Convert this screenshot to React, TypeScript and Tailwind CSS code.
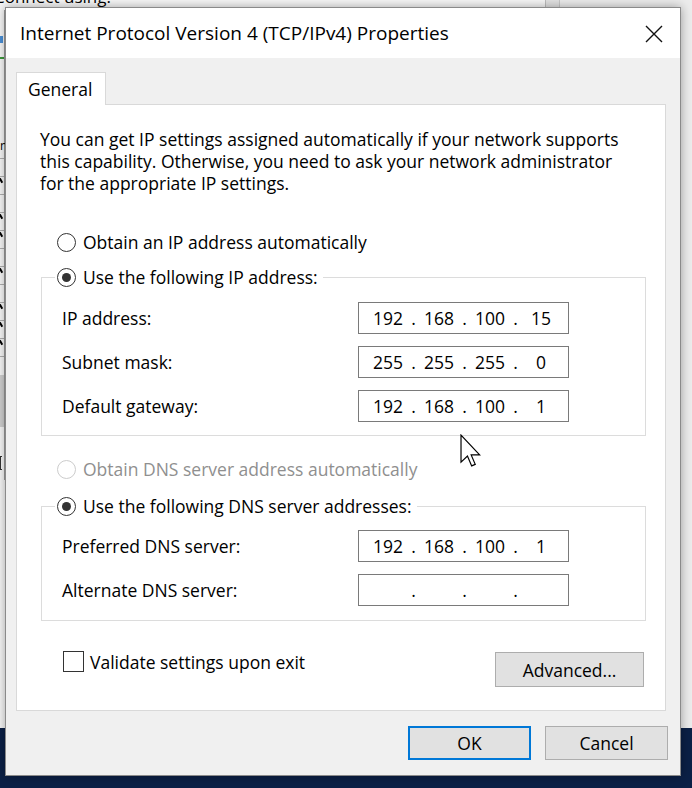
import React from "react";

function Radio({ checked, disabled }: { checked?: boolean; disabled?: boolean }) {
  return (
    <span
      className={
        disabled
          ? "flex h-[19px] w-[19px] shrink-0 items-center justify-center rounded-full border border-[#cccccc] bg-white"
          : "flex h-[19px] w-[19px] shrink-0 items-center justify-center rounded-full border border-[#333333] bg-white"
      }
    >
      {checked && <span className="h-[9px] w-[9px] rounded-full bg-[#333333]" />}
    </span>
  );
}

function IpField({ octets }: { octets: string[] }) {
  return (
    <div className="flex h-[32px] w-[211px] items-center border border-[#7a7a7a] bg-white pl-[9px]">
      {octets.map((o, i) => (
        <React.Fragment key={i}>
          <span className="w-[40px] text-center">{o}</span>
          {i < 3 && <span className="w-[11px] text-center">.</span>}
        </React.Fragment>
      ))}
    </div>
  );
}

function Row({ label, octets }: { label: string; octets: string[] }) {
  return (
    <div className="flex items-center">
      <span className="w-[296px]">{label}</span>
      <IpField octets={octets} />
    </div>
  );
}

export default function App() {
  return (
    <div className="relative h-[788px] w-[692px] overflow-hidden bg-[#ececec] font-['Open_Sans','Noto_Sans',sans-serif] text-[17.5px] leading-[22px] text-black">
      {/* background window behind dialog */}
      <div className="absolute left-0 top-0 h-[728px] w-[545px] bg-[#f7f7f7]" />
      <div className="absolute left-[545px] top-0 h-[728px] w-px bg-[#bdbdbd]" />
      <div className="absolute left-[546px] top-0 h-[728px] w-[13px] bg-[#e2e2e2]" />
      <div className="absolute left-[559px] top-0 h-[728px] w-px bg-[#c8c8c8]" />
      <div className="absolute left-[-6px] top-[-13px] text-[17px] leading-[20px]">Connect using:</div>
      <div className="absolute left-0 top-[36px] h-[7px] w-[3px] bg-[#4a8fd6]" />
      <div className="absolute left-0 top-[57px] h-[2px] w-[4px] bg-[#3c9a3c]" />
      <div className="absolute left-[4px] top-[10px] h-[470px] w-px bg-[#9a9a9a]" />
      <div className="absolute left-0 top-[142px] h-[8px] w-[4px] text-[12px] leading-[8px]">n</div>
      {[158, 176, 194, 212, 230, 248, 266, 284, 302, 320, 338, 356].map((y) => (
        <div key={y} className="absolute left-0 h-px w-[4px] bg-[#b0b0b0]" style={{ top: y }} />
      ))}
      {[178, 214, 232, 268, 304, 322, 340].map((y) => (
        <div key={y} className="absolute left-0 h-[5px] w-[2px] rotate-[-30deg] bg-black" style={{ top: y }} />
      ))}
      <div className="absolute left-0 top-[375px] h-[52px] w-[4px] bg-[#cfcfcf]" />
      <div className="absolute left-0 top-[456px] h-[14px] w-[2px] border border-r-0 border-[#333]" />
      <div className="absolute inset-x-0 bottom-0 top-[728px] bg-[#0b2046]" />

      {/* dialog */}
      <div className="absolute left-[5px] top-[7px] flex h-[769px] w-[676px] flex-col border border-[#8a8a8a] bg-[#f0f0f0] shadow-[0_0_10px_rgba(0,0,0,0.35)]">
        <div className="flex h-[50px] shrink-0 items-center justify-between bg-white pl-[14px] pr-[17px]">
          <span className="text-[19px]">Internet Protocol Version 4 (TCP/IPv4) Properties</span>
          <svg width="18" height="18" viewBox="0 0 18 18" className="mt-[1px]">
            <path d="M1 1 L17 17 M17 1 L1 17" stroke="#111" strokeWidth="1.4" fill="none" />
          </svg>
        </div>

        <div className="ml-[10px] mt-[14px] flex w-[650px] flex-col">
          <div className="flex">
            <div className="relative z-10 -mb-px flex h-[33px] w-[90px] items-center border border-b-0 border-[#d9d9d9] bg-white pl-[11px]">
              General
            </div>
          </div>
          <div className="flex h-[607px] flex-col border border-[#d9d9d9] bg-white">
            <p className="pl-[23px] pt-[23px] leading-[22px]">
              You can get IP settings assigned automatically if your network supports
              <br />
              this capability. Otherwise, you need to ask your network administrator
              <br />
              for the appropriate IP settings.
            </p>

            <div className="ml-[40px] mt-[37px] flex h-[22px] items-center gap-[7px]">
              <Radio />
              <span>Obtain an IP address automatically</span>
            </div>

            <fieldset className="ml-[24px] mt-[13px] w-[605px] border border-[#dcdcdc] pb-[13px] pl-[20px] pt-[14px]">
              <legend className="ml-[-7px] flex h-[22px] items-center gap-[7px] pl-[2px] pr-[5px]">
                <Radio checked />
                <span>Use the following IP address:</span>
              </legend>
              <div className="flex flex-col gap-[12px]">
                <Row label="IP address:" octets={["192", "168", "100", "15"]} />
                <Row label="Subnet mask:" octets={["255", "255", "255", "0"]} />
                <Row label="Default gateway:" octets={["192", "168", "100", "1"]} />
              </div>
            </fieldset>

            <div className="ml-[40px] mt-[22px] flex h-[22px] items-center gap-[7px] text-[#8f8f8f]">
              <Radio disabled />
              <span>Obtain DNS server address automatically</span>
            </div>

            <fieldset className="ml-[24px] mt-[15px] w-[605px] border border-[#dcdcdc] pb-[14px] pl-[20px] pt-[13px]">
              <legend className="ml-[-7px] flex h-[22px] items-center gap-[7px] pl-[2px] pr-[5px]">
                <Radio checked />
                <span>Use the following DNS server addresses:</span>
              </legend>
              <div className="flex flex-col gap-[12px]">
                <Row label="Preferred DNS server:" octets={["192", "168", "100", "1"]} />
                <Row label="Alternate DNS server:" octets={["", "", "", ""]} />
              </div>
            </fieldset>

            <div className="mt-[30px] flex items-start justify-between pl-[46px] pr-[21px]">
              <div className="flex h-[21px] items-center gap-[6px]">
                <span className="h-[21px] w-[21px] border border-[#333333] bg-white" />
                <span>Validate settings upon exit</span>
              </div>
              <button className="mt-[1px] flex h-[35px] w-[149px] items-center justify-center border border-[#adadad] bg-[#e1e1e1]">
                Advanced...
              </button>
            </div>
          </div>

          <div className="mt-[15px] flex justify-end gap-[14px]">
            <button className="flex h-[34px] w-[123px] items-center justify-center border-2 border-[#0078d7] bg-[#e1e1e1]">
              OK
            </button>
            <button className="-mr-[2px] flex h-[34px] w-[123px] items-center justify-center border border-[#adadad] bg-[#e1e1e1]">
              Cancel
            </button>
          </div>
        </div>
      </div>

      {/* mouse pointer */}
      <svg className="absolute left-[460px] top-[434px]" width="22" height="34" viewBox="0 0 13 20">
        <path
          d="M0.6 0.6 V16.6 L4.4 13 L6.9 18.8 L9 17.9 L6.6 12.3 H11.6 Z"
          fill="#fff"
          stroke="#000"
          strokeWidth="0.7"
          strokeLinejoin="miter"
        />
      </svg>
    </div>
  );
}
